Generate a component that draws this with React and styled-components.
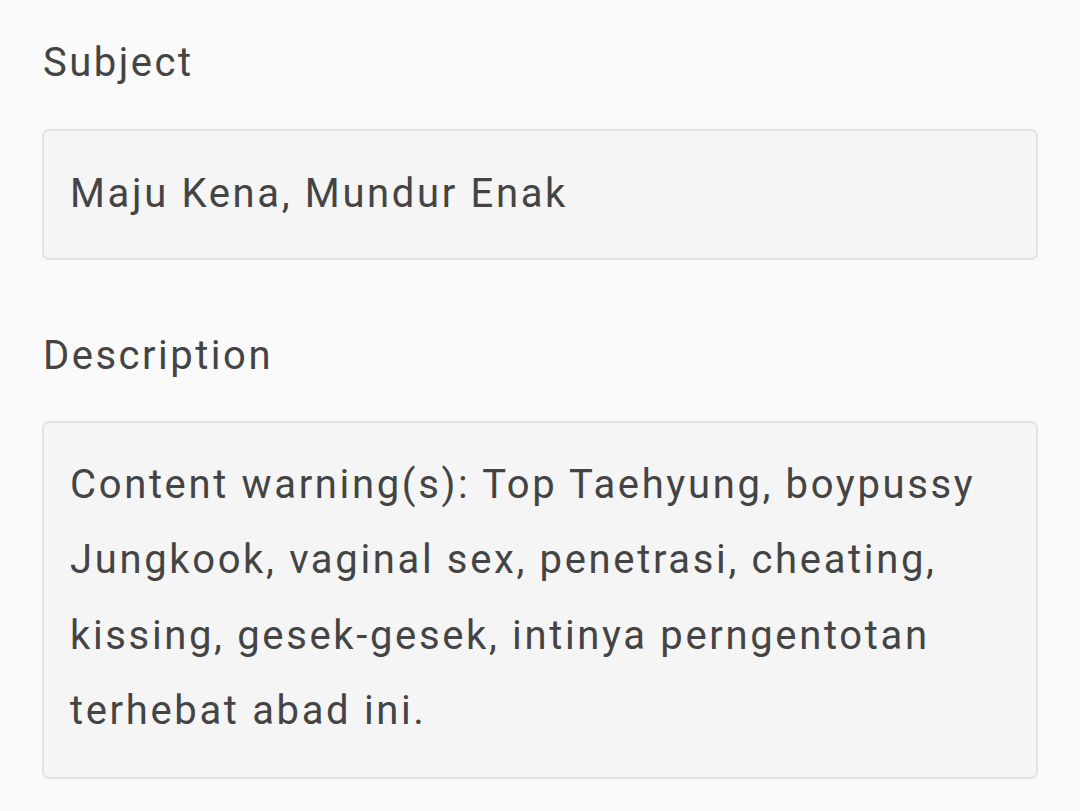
import React from "react";
import styled, { createGlobalStyle } from "styled-components";

const Global = createGlobalStyle`
  html, body { margin: 0; padding: 0; background: #fafafa; }
  body { font-family: Roboto, "Noto Sans", sans-serif; color: #424242; }
`;

const Page = styled.div`
  width: 1080px;
  height: 811px;
  box-sizing: border-box;
  padding: 25px 42px 0 42px;
  background: #fafafa;
  overflow: hidden;
`;

const Field = styled.div`
  display: flex;
  flex-direction: column;
  gap: ${(p) => p.$gap}px;
  margin-bottom: ${(p) => p.$after || 0}px;
`;

const Label = styled.div`
  font-size: 40px;
  line-height: 75px;
  letter-spacing: 2.5px;
  color: #444444;
  padding-left: 1px;
`;

const Box = styled.div`
  box-sizing: border-box;
  background: #f5f5f5;
  border: 2px solid #e3e3e3;
  border-radius: 7px;
  padding: ${(p) => p.$pad};
  font-size: 40px;
  line-height: 75.5px;
  letter-spacing: 2.65px;
  color: #444444;
`;

export default function App() {
  return (
    <>
      <Global />
      <Page>
        <Field $gap={29} $after={58}>
          <Label>Subject</Label>
          <Box $pad="25px 26px 26px 26px">Maju Kena, Mundur Enak</Box>
        </Field>
        <Field $gap={28}>
          <Label>Description</Label>
          <Box $pad="24px 26px 28px 26px">
            Content warning(s): Top Taehyung, boypussy Jungkook, vaginal sex,
            penetrasi, cheating, kissing, gesek-gesek, intinya perngentotan
            terhebat abad ini.
          </Box>
        </Field>
      </Page>
    </>
  );
}
